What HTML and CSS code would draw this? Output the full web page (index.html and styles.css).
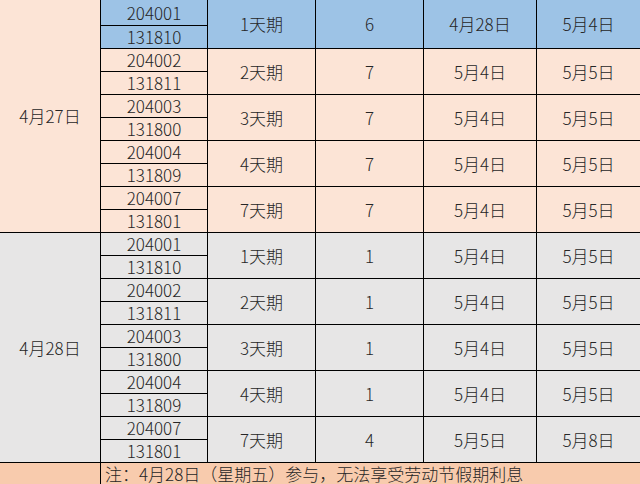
FILE: index.html
```html
<!DOCTYPE html>
<html lang="zh">
<head>
<meta charset="utf-8">
<link rel="stylesheet" href="styles.css">
</head>
<body>
<table class="grid">
  <colgroup>
    <col class="c1"><col class="c2"><col class="c3"><col class="c4"><col class="c5"><col class="c6">
  </colgroup>
  <tbody>
    <tr class="first">
      <td rowspan="10" class="peach">4月27日</td>
      <td class="blue">204001</td>
      <td rowspan="2" class="blue">1天期</td>
      <td rowspan="2" class="blue">6</td>
      <td rowspan="2" class="blue">4月28日</td>
      <td rowspan="2" class="blue">5月4日</td>
    </tr>
    <tr><td class="blue">131810</td></tr>
    <tr>
      <td class="peach">204002</td>
      <td rowspan="2" class="peach">2天期</td>
      <td rowspan="2" class="peach">7</td>
      <td rowspan="2" class="peach">5月4日</td>
      <td rowspan="2" class="peach">5月5日</td>
    </tr>
    <tr><td class="peach">131811</td></tr>
    <tr>
      <td class="peach">204003</td>
      <td rowspan="2" class="peach">3天期</td>
      <td rowspan="2" class="peach">7</td>
      <td rowspan="2" class="peach">5月4日</td>
      <td rowspan="2" class="peach">5月5日</td>
    </tr>
    <tr><td class="peach">131800</td></tr>
    <tr>
      <td class="peach">204004</td>
      <td rowspan="2" class="peach">4天期</td>
      <td rowspan="2" class="peach">7</td>
      <td rowspan="2" class="peach">5月4日</td>
      <td rowspan="2" class="peach">5月5日</td>
    </tr>
    <tr><td class="peach">131809</td></tr>
    <tr>
      <td class="peach">204007</td>
      <td rowspan="2" class="peach">7天期</td>
      <td rowspan="2" class="peach">7</td>
      <td rowspan="2" class="peach">5月4日</td>
      <td rowspan="2" class="peach">5月5日</td>
    </tr>
    <tr><td class="peach">131801</td></tr>

    <tr>
      <td rowspan="10" class="gray">4月28日</td>
      <td class="gray">204001</td>
      <td rowspan="2" class="gray">1天期</td>
      <td rowspan="2" class="gray">1</td>
      <td rowspan="2" class="gray">5月4日</td>
      <td rowspan="2" class="gray">5月5日</td>
    </tr>
    <tr><td class="gray">131810</td></tr>
    <tr>
      <td class="gray">204002</td>
      <td rowspan="2" class="gray">2天期</td>
      <td rowspan="2" class="gray">1</td>
      <td rowspan="2" class="gray">5月4日</td>
      <td rowspan="2" class="gray">5月5日</td>
    </tr>
    <tr><td class="gray">131811</td></tr>
    <tr>
      <td class="gray">204003</td>
      <td rowspan="2" class="gray">3天期</td>
      <td rowspan="2" class="gray">1</td>
      <td rowspan="2" class="gray">5月4日</td>
      <td rowspan="2" class="gray">5月5日</td>
    </tr>
    <tr><td class="gray">131800</td></tr>
    <tr>
      <td class="gray">204004</td>
      <td rowspan="2" class="gray">4天期</td>
      <td rowspan="2" class="gray">1</td>
      <td rowspan="2" class="gray">5月4日</td>
      <td rowspan="2" class="gray">5月5日</td>
    </tr>
    <tr><td class="gray">131809</td></tr>
    <tr>
      <td class="gray">204007</td>
      <td rowspan="2" class="gray">7天期</td>
      <td rowspan="2" class="gray">4</td>
      <td rowspan="2" class="gray">5月5日</td>
      <td rowspan="2" class="gray">5月8日</td>
    </tr>
    <tr><td class="gray">131801</td></tr>

    <tr>
      <td class="salmon"></td>
      <td colspan="5" class="salmon note">注：4月28日（星期五）参与，无法享受劳动节假期利息</td>
    </tr>
  </tbody>
</table>
</body>
</html>
```

FILE: styles.css
```css
html, body {
  margin: 0;
  padding: 0;
  background: #ffffff;
  overflow: hidden;
}

.grid {
  border-collapse: collapse;
  table-layout: fixed;
  width: 641px;
  margin: -1px 0 0 -1px;
  font-family: "Noto Sans CJK SC", "Liberation Sans", sans-serif;
  font-size: 17px;
  font-weight: 300;
  color: #262626;
}

.c1 { width: 101px; }
.c2 { width: 107px; }
.c3 { width: 108px; }
.c4 { width: 108px; }
.c5 { width: 113px; }
.c6 { width: 104px; }

.grid td {
  border: 1px solid #000;
  height: 22px;
  padding: 0;
  line-height: 20px;
  text-align: center;
  vertical-align: middle;
  white-space: nowrap;
  overflow: hidden;
}

.grid .first td {
  height: 25px;
}

.blue { background: #9dc3e6; }
.peach { background: #fce4d6; }
.gray { background: #e7e6e6; }
.salmon { background: #f8cbad; }

.grid td.note {
  text-align: left;
  padding-left: 4px;
}
```
